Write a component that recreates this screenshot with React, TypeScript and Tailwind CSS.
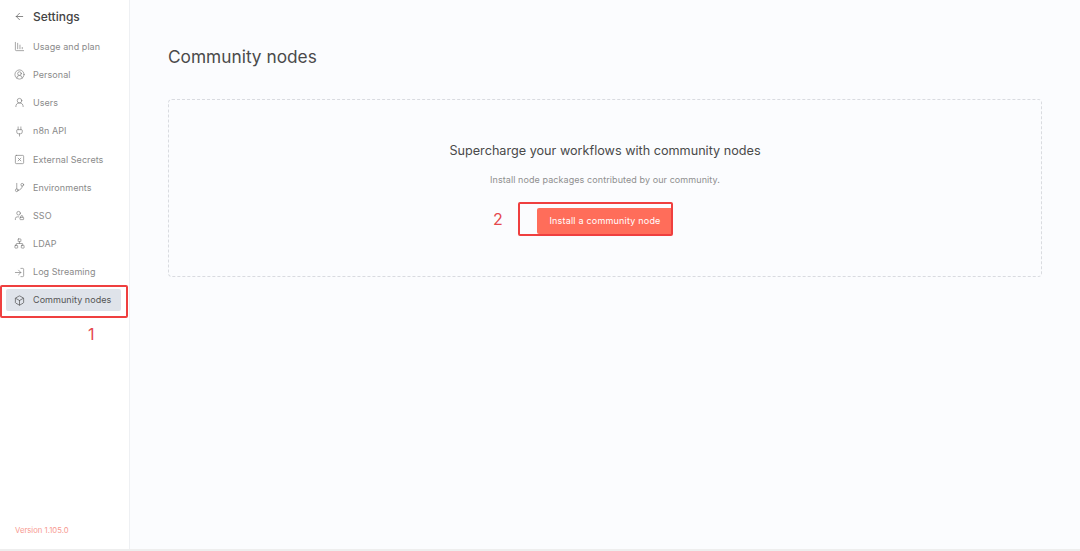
import React from 'react';
import {
  ArrowLeft,
  ChartColumnDecreasing,
  CircleUserRound,
  UserRound,
  Plug,
  SquareX,
  GitBranch,
  UserLock,
  Network,
  LogIn,
  Box,
  type LucideIcon,
} from 'lucide-react';

type NavItem = { label: string; icon: LucideIcon; active?: boolean };

const navItems: NavItem[] = [
  { label: 'Usage and plan', icon: ChartColumnDecreasing },
  { label: 'Personal', icon: CircleUserRound },
  { label: 'Users', icon: UserRound },
  { label: 'n8n API', icon: Plug },
  { label: 'External Secrets', icon: SquareX },
  { label: 'Environments', icon: GitBranch },
  { label: 'SSO', icon: UserLock },
  { label: 'LDAP', icon: Network },
  { label: 'Log Streaming', icon: LogIn },
  { label: 'Community nodes', icon: Box, active: true },
];

const Sidebar = () => (
  <aside className="flex w-[130px] shrink-0 flex-col border-r border-[#eef0f3] bg-white">
    <div className="flex h-[33px] items-center pl-[14px]">
      <ArrowLeft size={11} strokeWidth={1.5} className="text-[#555]" />
      <span className="ml-[8px] text-[12px] font-medium text-[#444]">Settings</span>
    </div>
    <nav className="flex flex-col pl-[6px] pr-[8px] pt-[2.5px]">
      {navItems.map(({ label, icon: Icon, active }) => (
        <div
          key={label}
          className={`flex h-[22px] items-center pl-[8px] mb-[6.2px] rounded-[2px] ${active ? 'bg-[#dfe3ea]' : ''}`}
        >
          <Icon size={11} strokeWidth={1.4} className={active ? 'text-[#444]' : 'text-[#777]'} />
          <span className={`ml-[8px] text-[9px] tracking-[0.06px] whitespace-nowrap ${active ? 'text-[#555]' : 'text-[#8a8a8a]'}`}>
            {label}
          </span>
        </div>
      ))}
    </nav>
    <div className="mt-auto pb-[12px] pl-[15px] text-[7.7px] text-[#f79a91]">Version 1.105.0</div>
  </aside>
);

export default function App() {
  return (
    <div className="relative flex h-[551px] w-[1080px] overflow-hidden border-b-2 border-[#eeeeee] bg-[#fbfcfe] font-['Inter',sans-serif]">
      <Sidebar />
      <main className="flex-1 pl-[38px] pr-[38px] pt-[46px]">
        <h1 className="text-[17.3px] leading-[22px] text-[#4a4a4a]">Community nodes</h1>
        <section className="mt-[31px] flex h-[178px] flex-col items-center rounded-[4px] border border-dashed border-[#d9dbe0] pt-[42px]">
          <h2 className="text-[12.65px] leading-[18px] text-[#4a4a4a]">Supercharge your workflows with community nodes</h2>
          <p className="mt-[14px] text-[9px] leading-[12px] tracking-[0.08px] text-[#8f8f8f]">
            Install node packages contributed by our community.
          </p>
          <button className="mt-[22px] h-[26px] w-[136px] rounded-[2px] bg-[#ff6d5a] text-[9px] tracking-[0.2px] text-[#fff]">
            Install a community node
          </button>
        </section>
      </main>

      {/* red annotations drawn on top of the screenshot */}
      <div className="absolute left-0 top-[285px] h-[33px] w-[128px] rounded-[2px] border-[2.5px] border-[#ef3f3f]" />
      <span className="absolute left-[88px] top-[324px] text-[16px] leading-[20px] text-[#e5484d]">1</span>
      <div className="absolute left-[518px] top-[202px] h-[34px] w-[155px] rounded-[2px] border-[2.5px] border-[#ef3f3f]" />
      <span className="absolute left-[493px] top-[209px] text-[16px] leading-[20px] text-[#e5484d]">2</span>
    </div>
  );
}
